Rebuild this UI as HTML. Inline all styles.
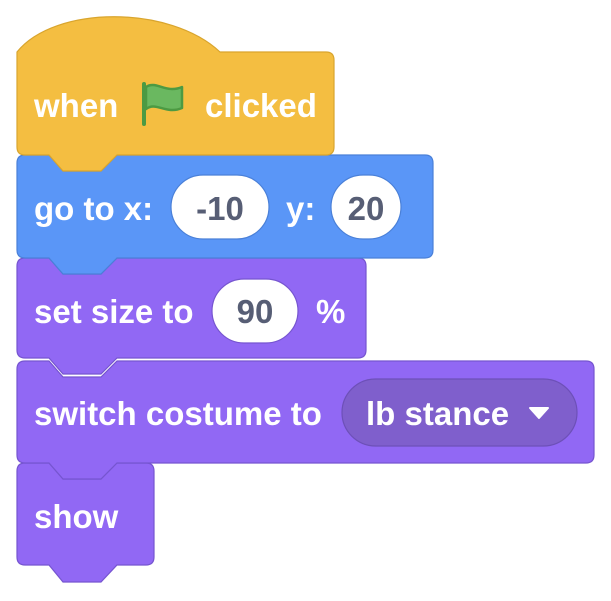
<!DOCTYPE html>
<html><head><style>
html,body{margin:0;padding:0;background:#fff;width:611px;height:601px;overflow:hidden}
svg text{font-family:"Liberation Sans",Arial,sans-serif;font-weight:bold;font-size:33px}
</style></head><body>
<svg width="611" height="601" viewBox="0 0 611 601" xmlns="http://www.w3.org/2000/svg">
<!-- show -->
<path d="M17,471 Q17,463 25,463 L49,463 L63,479 L101,479 L117,463 L146,463 Q154,463 154,471 L154,557 Q154,565 146,565 L117,565 L101,582 L63,582 L49,565 L25,565 Q17,565 17,557 Z" fill="#9168f4" stroke="#7655d0" stroke-width="1.2"/>
<text x="34" y="528" fill="#fff">show</text>
<!-- switch costume -->
<path d="M17,369 Q17,361 25,361 L49,361 L63,377 L101,377 L117,361 L586,361 Q594,361 594,369 L594,455 Q594,463 586,463 L117,463 L101,479 L63,479 L49,463 L25,463 Q17,463 17,455 Z" fill="#9168f4" stroke="#7655d0" stroke-width="1.2"/>
<text x="34" y="425" fill="#fff">switch costume to</text>
<rect x="342" y="379" width="235" height="67" rx="33.5" fill="#7f5fcc" stroke="#6d50b8" stroke-width="1.2"/>
<text x="366" y="425" fill="#fff">lb stance</text>
<path d="M530,408 L548,408 L539,418 Z" fill="#fff" stroke="#fff" stroke-width="2" stroke-linejoin="round"/>
<!-- set size -->
<path d="M17,266 Q17,258 25,258 L49,258 L63,274 L101,274 L117,258 L358,258 Q366,258 366,266 L366,350 Q366,358 358,358 L117,358 L101,374 L63,374 L49,358 L25,358 Q17,358 17,350 Z" fill="#9168f4" stroke="#7655d0" stroke-width="1.2"/>
<text x="34" y="323" fill="#fff">set size to</text>
<rect x="212" y="279" width="86" height="64" rx="32" fill="#fff" stroke="#7655d0" stroke-width="1.2"/>
<text x="255" y="323" fill="#575e75" text-anchor="middle">90</text>
<text x="316" y="323" fill="#fff">%</text>
<!-- blue -->
<path d="M17,163 Q17,155 25,155 L49,155 L63,171 L101,171 L117,155 L425,155 Q433,155 433,163 L433,250 Q433,258 425,258 L117,258 L101,274 L63,274 L49,258 L25,258 Q17,258 17,250 Z" fill="#5a96f7" stroke="#4a80d8" stroke-width="1.2"/>
<text x="34" y="220" fill="#fff">go to x:</text>
<rect x="171" y="175" width="98" height="64" rx="32" fill="#fff" stroke="#4a80d8" stroke-width="1.2"/>
<text x="220" y="220" fill="#575e75" text-anchor="middle">-10</text>
<text x="286" y="220" fill="#fff">y:</text>
<rect x="331" y="175" width="70" height="64" rx="32" fill="#fff" stroke="#4a80d8" stroke-width="1.2"/>
<text x="366" y="220" fill="#575e75" text-anchor="middle">20</text>
<!-- hat -->
<path d="M17,52 C55,5 170,5 220,52 L326,52 Q334,52 334,60 L334,147 Q334,155 326,155 L117,155 L101,171 L63,171 L49,155 L25,155 Q17,155 17,147 Z" fill="#f4be41" stroke="#d9a52e" stroke-width="1.2"/>
<text x="34" y="117" fill="#fff">when</text>
<path d="M144,84 L144,124" stroke="#4c9a43" stroke-width="4" stroke-linecap="round"/>
<path d="M146,87 C156,80 166,94 182,87 L182,108 C166,115 156,101 146,109 Z" fill="#6ab860" stroke="#4c9a43" stroke-width="2.5" stroke-linejoin="round"/>
<text x="205" y="117" fill="#fff">clicked</text>
</svg>
</body></html>
